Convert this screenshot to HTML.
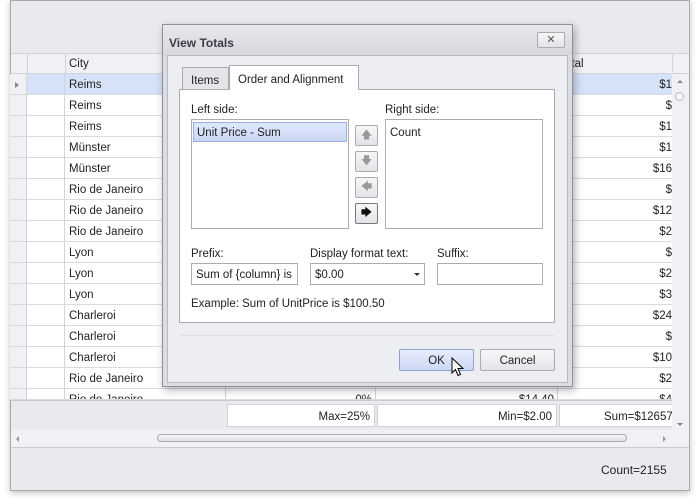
<!DOCTYPE html>
<html><head><style>
*{margin:0;padding:0;box-sizing:border-box}
body{width:699px;height:501px;background:#fff;font-family:"Liberation Sans",sans-serif;font-size:11.5px;color:#222;position:relative;overflow:hidden}
.a{position:absolute}
.row{position:absolute;left:10px;width:662px;height:21px;border-bottom:1px solid #d8dadf}
.c{position:absolute;top:0;height:21px;line-height:23px;white-space:nowrap;overflow:hidden}
.box{position:absolute;background:#fff;border:1px solid #abadb3}
.btn{position:absolute;border:1px solid #a9abb1;border-radius:2px;background:linear-gradient(#f7f7f9,#e3e4e8);text-align:center}
</style></head><body>
<div class="a" style="left:10px;top:0;width:680px;height:491px;background:#e9eaee;border:1px solid #a8aab0;box-shadow:0 2px 6px rgba(0,0,0,.25)"></div>
<div class="a" style="left:11px;top:53px;width:678px;height:21px;background:#f0f1f4;border-top:1px solid #d3d5da;border-bottom:1px solid #d3d5da"></div>
<div class="a" style="left:27px;top:53px;height:21px;border-left:1px solid #d3d5da"></div>
<div class="a" style="left:65px;top:53px;height:21px;border-left:1px solid #d3d5da"></div>
<div class="a" style="left:69px;top:58px;">City</div>
<div class="a" style="left:565px;top:58px;">otal</div>
<div class="a" style="left:672px;top:53px;height:21px;border-left:1px solid #d3d5da"></div>
<div class="a" style="left:11px;top:74px;width:661px;height:326px;background:#fff;overflow:hidden"></div>
<div class="a" style="left:11px;top:74px;width:16px;height:326px;background:#f0f1f4;border-right:1px solid #d3d5da"></div>
<div class="a" style="left:672px;top:74px;width:17px;height:356px;background:#f0f1f4"></div>
<div class="a" style="left:677px;top:80px;width:0;height:0;border-bottom:3px solid #888;border-left:3px solid transparent;border-right:3px solid transparent"></div>
<div class="a" style="left:675px;top:92px;width:9px;height:9px;border:1px solid #bbb;border-radius:50%;background:#f8f8f8"></div>
<div class="a" style="left:677px;top:423px;width:0;height:0;border-top:3px solid #888;border-left:3px solid transparent;border-right:3px solid transparent"></div>
<div id="rows"></div>
<div class="a" style="left:15px;top:82px;width:0;height:0;border-left:4px solid #888;border-top:3.5px solid transparent;border-bottom:3.5px solid transparent"></div>
<div class="a" style="left:11px;top:400px;width:661px;height:30px;background:#e9eaee;border-top:1px solid #c9cbd0"></div>
<div class="box" style="left:227px;top:404px;width:148px;height:23px;border-color:#d0d2d6;text-align:right;padding:6px 4px 0 0">Max=25%</div>
<div class="box" style="left:377px;top:404px;width:180px;height:23px;border-color:#d0d2d6;text-align:right;padding:6px 4px 0 0">Min=$2.00</div>
<div class="box" style="left:559px;top:404px;width:113px;height:23px;border-color:#d0d2d6;border-right:none;padding:6px 0 0 44px;overflow:hidden;white-space:nowrap">Sum=$126575</div>
<div class="a" style="left:11px;top:430px;width:678px;height:18px;background:#f0f1f4;border-bottom:1px solid #c9cbd0"></div>
<div class="a" style="left:157px;top:434px;width:470px;height:8px;border:1px solid #a9abb1;border-radius:4px;background:linear-gradient(#f5f6f8,#dfe1e5)"></div>
<div class="a" style="left:16px;top:436px;border-right:3px solid #999;border-top:3px solid transparent;border-bottom:3px solid transparent"></div>
<div class="a" style="left:663px;top:436px;border-left:3px solid #999;border-top:3px solid transparent;border-bottom:3px solid transparent"></div>
<div class="a" style="left:601px;top:463px;font-size:12px">Count=2155</div>

<div class="a" style="left:162px;top:24px;width:411px;height:363px;background:#dcdde2;border:1px solid #8f9197;box-shadow:2px 3px 8px rgba(0,0,0,.3)"></div>
<div class="a" style="left:163px;top:25px;width:409px;height:30px;background:linear-gradient(#e8e9ec,#d6d7dc)"></div>
<div class="a" style="left:169px;top:36px;font-weight:bold;color:#3b3d45;font-size:12px">View Totals</div>
<div class="btn" style="left:537px;top:32px;width:28px;height:16px;line-height:14px;font-size:11px;color:#555">✕</div>
<div class="a" style="left:167px;top:55px;width:401px;height:328px;background:#eceef2;border:1px solid #b8bac0"></div>
<div class="a" style="left:182px;top:67px;width:47px;height:23px;background:#e4e5e9;border:1px solid #a9abb1;border-bottom:none;padding:7px 0 0 8px">Items</div>
<div class="a" style="left:229px;top:65px;width:130px;height:25px;background:#fff;border:1px solid #a9abb1;border-bottom:none;padding:8px 0 0 8px;z-index:2">Order and Alignment</div>
<div class="a" style="left:179px;top:89px;width:376px;height:234px;background:#fff;border:1px solid #a9abb1"></div>
<div class="a" style="left:191px;top:104px">Left side:</div>
<div class="a" style="left:385px;top:104px">Right side:</div>
<div class="box" style="left:191px;top:119px;width:158px;height:110px"></div>
<div class="a" style="left:193px;top:122px;width:154px;height:20px;background:linear-gradient(#dfe8fb,#cbd8f4);border:1px solid #9aaee0;padding:4px 0 0 3px">Unit Price - Sum</div>
<div class="box" style="left:385px;top:119px;width:158px;height:110px;padding:7px 0 0 4px">Count</div>
<div class="btn" style="left:355px;top:125px;width:23px;height:21px;color:#999;line-height:19px;font-size:11px">🡅</div>
<div class="btn" style="left:355px;top:151px;width:23px;height:21px;color:#999;line-height:19px;font-size:11px">🡇</div>
<div class="btn" style="left:355px;top:177px;width:23px;height:21px;color:#999;line-height:19px;font-size:11px">🡄</div>
<div class="btn" style="left:355px;top:203px;width:23px;height:21px;color:#111;line-height:19px;font-size:11px;border-color:#777">🡆</div>
<div class="a" style="left:191px;top:248px">Prefix:</div>
<div class="a" style="left:310px;top:248px">Display format text:</div>
<div class="a" style="left:437px;top:248px">Suffix:</div>
<div class="box" style="left:191px;top:263px;width:107px;height:22px;padding:5px 0 0 4px;overflow:hidden;white-space:nowrap">Sum of {column} is</div>
<div class="box" style="left:310px;top:263px;width:115px;height:22px;padding:5px 0 0 4px">$0.00<span class="a" style="left:103px;top:9px;border-top:3px solid #333;border-left:3px solid transparent;border-right:3px solid transparent"></span></div>
<div class="box" style="left:437px;top:263px;width:106px;height:22px"></div>
<div class="a" style="left:191px;top:298px">Example: Sum of UnitPrice is $100.50</div>
<div class="a" style="left:180px;top:335px;width:375px;border-top:1px solid #dfe0e4"></div>
<div class="btn" style="left:399px;top:349px;width:75px;height:22px;line-height:22px;background:linear-gradient(#e6edfc,#ccd8f4);border-color:#8ea2d0">OK</div>
<div class="btn" style="left:480px;top:349px;width:75px;height:22px;line-height:22px">Cancel</div>
<svg class="a" style="left:451px;top:357px" width="13" height="21" viewBox="0 0 13 21"><path d="M1 1 L1 16 L4.5 12.5 L7 18.5 L9.5 17.5 L7 11.5 L12 11.5 Z" fill="#fff" stroke="#000" stroke-width="1"/></svg>
<script>
var d=[["Reims","$1"],["Reims","$"],["Reims","$1"],["Münster","$1"],["Münster","$16"],["Rio de Janeiro","$"],["Rio de Janeiro","$12"],["Rio de Janeiro","$2"],["Lyon","$"],["Lyon","$2"],["Lyon","$3"],["Charleroi","$24"],["Charleroi","$"],["Charleroi","$10"],["Rio de Janeiro","$2"],["Rio de Janeiro","$4"]];
var h="";d.forEach(function(r,i){var t=74+i*21;var bg=i==0?"#d5e2f8":"#fff";var ht=i==15?11:21;
h+='<div class="row" style="top:'+t+'px;height:'+ht+'px;overflow:hidden;background:'+bg+'"><div class="c" style="left:0;width:17px;background:#f0f1f4;border-right:1px solid #d3d5da"></div><div class="c" style="left:17px;width:38px;border-right:1px solid #d3d5da"></div><div class="c" style="left:55px;width:161px;border-right:1px solid #d3d5da;padding-left:4px">'+r[0]+'</div><div class="c" style="left:216px;width:150px;border-right:1px solid #d3d5da;text-align:right;padding-right:3px">'+(i==15?"0%":"")+'</div><div class="c" style="left:366px;width:182px;border-right:1px solid #d3d5da;text-align:right;padding-right:3px">'+(i==15?"$14.40":"")+'</div><div class="c" style="left:548px;width:114px;text-align:right">'+r[1]+'</div></div>';});
document.getElementById("rows").innerHTML=h;
</script>
</body></html>
